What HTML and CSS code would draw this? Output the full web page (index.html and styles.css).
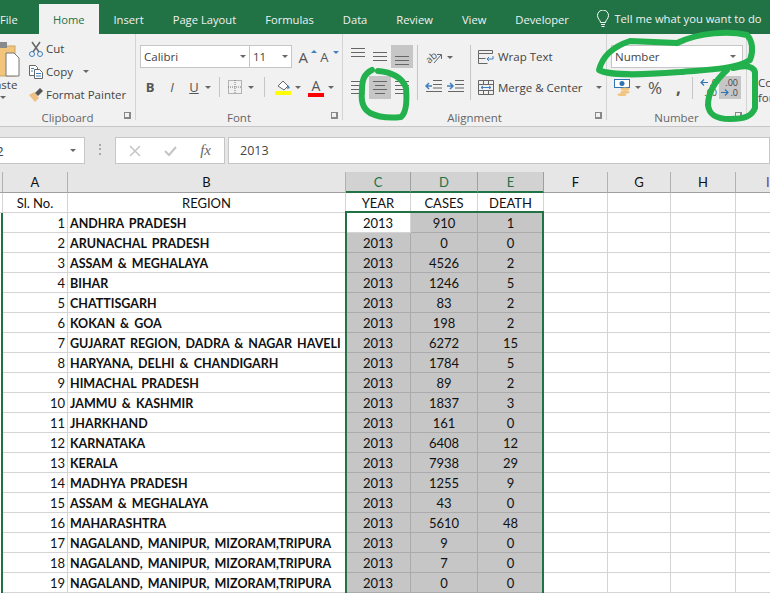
FILE: index.html
```html
<!DOCTYPE html>
<html lang="en">
<head>
    <meta charset="UTF-8">
    <title>Excel - Home ribbon</title>
    <link rel="stylesheet" href="styles.css">
</head>
<body>

<div class="tabs">
    <span class="tab tab-file">File</span>
    <span class="tab tab-active">Home</span>
    <span class="tab">Insert</span>
    <span class="tab">Page Layout</span>
    <span class="tab">Formulas</span>
    <span class="tab">Data</span>
    <span class="tab">Review</span>
    <span class="tab">View</span>
    <span class="tab">Developer</span>
    <span class="tell">
        <svg width="14" height="18" viewBox="0 0 14 18" fill="none" stroke="#fff"><path d="M4.5 12.5c0-2.5-3-3.500-3-7a5.500 5.500 0 0 1 11 0c0 3.500-3 4.500-3 7z"/><path d="M5 14.500h4M5.500 16.500h3"/></svg>
        Tell me what you want to do
    </span>
</div>

<div class="ribbon">
    <!-- Clipboard -->
    <section class="group group-clipboard">
        <div class="group-body clip-body">
            <div class="paste">
                <svg width="26" height="36" viewBox="0 0 26 36">
                    <rect x="-8" y="5" width="23" height="30" fill="#f3c47c" stroke="#c9a56b"/>
                    <rect x="-2" y="1" width="9" height="6" fill="#8a8a8a"/>
                    <path d="M6 12h8l5 5v18H6z" fill="#fff" stroke="#777"/>
                </svg>
                <span class="paste-label">Paste</span>
                <span class="caret paste-caret"></span>
            </div>
            <div class="clip-list">
                <div class="clip-row">
                    <svg width="16" height="16" viewBox="0 0 16 16" fill="none"><path d="M4 1l7 10M12 1L5 11" stroke="#666" stroke-width="1.500"/><circle cx="4" cy="13" r="2.500" stroke="#3f7fbf"/><circle cx="12" cy="13" r="2.500" stroke="#3f7fbf"/></svg>
                    <span>Cut</span>
                </div>
                <div class="clip-row">
                    <svg width="16" height="16" viewBox="0 0 16 16" fill="#fff" stroke="#666"><path d="M1.500 1.500h6l2 2v8h-8z"/><path d="M6.500 5.500h5l3 3v6h-8z"/><path d="M3 4.500h3M3 7h2M8 9.500h5M8 12h5" stroke="#3f7fbf"/></svg>
                    <span>Copy</span>
                    <span class="caret copy-caret"></span>
                </div>
                <div class="clip-row">
                    <svg width="16" height="16" viewBox="0 0 16 16"><path d="M1 8l5-3 5 6-4 4z" fill="#efc083"/><path d="M7 6l5-5 3 3-5 5z" fill="#555"/></svg>
                    <span>Format Painter</span>
                </div>
            </div>
        </div>
        <div class="group-label">Clipboard</div>
        <span class="launcher"></span>
    </section>

    <!-- Font -->
    <section class="group group-font">
        <div class="group-body font-body">
            <div class="tool-row">
                <div class="combo combo-font"><span>Calibri</span><span class="caret"></span></div>
                <div class="combo combo-size"><span>11</span><span class="caret"></span></div>
                <span class="grow-a">A<i class="tri-up"></i></span>
                <span class="shrink-a">A<i class="tri-down"></i></span>
            </div>
            <div class="tool-row font-row2">
                <b class="fmt fmt-b">B</b>
                <i class="fmt fmt-i">I</i>
                <u class="fmt fmt-u">U</u>
                <span class="caret"></span>
                <span class="sep sep-a"></span>
                <svg class="borders" width="14" height="14" viewBox="0 0 14 14" fill="none" stroke="#777" stroke-dasharray="1 1"><path d="M.5.500h13v13H.5zM7 0v14M0 7h14"/></svg>
                <span class="caret"></span>
                <span class="sep sep-b"></span>
                <span class="fill-icon">
                    <svg width="16" height="12" viewBox="0 0 16 12"><path d="M3 7l5-5 5 5-4 4z" fill="#fff" stroke="#666"/><path d="M13 6l2 3-3 1z" fill="#3f7fbf"/></svg>
                    <i class="swatch swatch-yellow"></i>
                </span>
                <span class="caret"></span>
                <span class="color-a">A<i class="swatch swatch-red"></i></span>
                <span class="caret"></span>
            </div>
        </div>
        <div class="group-label">Font</div>
        <span class="launcher"></span>
    </section>

    <!-- Alignment -->
    <section class="group group-align">
        <div class="group-body align-body">
            <div class="align-grid">
                <span class="btn"><i class="lines lines-top"></i></span>
                <span class="btn"><i class="lines lines-mid"></i></span>
                <span class="btn btn-on"><i class="lines lines-bot"></i></span>
                <span class="btn"><i class="lines lines-left"></i></span>
                <span class="btn btn-on"><i class="lines lines-center"></i></span>
                <span class="btn"><i class="lines lines-right"></i></span>
            </div>
            <span class="sep sep-tall"></span>
            <div class="indent-col">
                <div class="tool-row">
                    <svg width="18" height="18" viewBox="0 0 18 18" fill="none"><text x="0" y="13" font-size="10" font-family="Open Sans" fill="#555" transform="rotate(-40 6 9)">ab</text><path d="M9 15l7-8M12 6.500h4.500V11" stroke="#666"/></svg>
                    <span class="caret orient-caret"></span>
                </div>
                <div class="tool-row indent-row">
                    <svg width="17" height="12" viewBox="0 0 17 12" fill="none"><path d="M8 .500h9M8 4.500h9M8 8h9M1 11.500h16" stroke="#666"/><path d="M7 6H1M4 3L1 6l3 3" stroke="#3f7fbf" stroke-width="1.500"/></svg>
                    <svg width="17" height="12" viewBox="0 0 17 12" fill="none"><path d="M8 .500h9M8 4.500h9M8 8h9M1 11.500h16" stroke="#666"/><path d="M0 6h6M3 3l3 3-3 3" stroke="#3f7fbf" stroke-width="1.500"/></svg>
                </div>
            </div>
            <span class="sep sep-tall"></span>
            <div class="wrap-col">
                <div class="tool-row wrap-row">
                    <svg width="16" height="16" viewBox="0 0 16 16" fill="none"><path d="M.5 1.500h14v3H.5zM.5 4.500v10h9M.5 9.500h7" stroke="#666"/><path d="M15 7v3h-6M11 8l-2 2 2 2" stroke="#3f7fbf"/></svg>
                    <span>Wrap Text</span>
                </div>
                <div class="tool-row wrap-row">
                    <svg width="16" height="15" viewBox="0 0 16 15" fill="none"><path d="M.5.500h15v14H.5zM.5 4.500h15M.5 10.500h15M5.500.500v4M10.500.500v4M5.500 10.500v4M10.500 10.500v4" stroke="#666"/><path d="M3 7.500h10M5 6L3 7.500 5 9M11 6l2 1.500L11 9" stroke="#3f7fbf"/></svg>
                    <span>Merge &amp; Center</span>
                    <span class="caret merge-caret"></span>
                </div>
            </div>
        </div>
        <div class="group-label">Alignment</div>
        <span class="launcher"></span>
    </section>

    <!-- Number -->
    <section class="group group-number">
        <div class="group-body number-body">
            <div class="combo combo-number"><span>Number</span><span class="caret"></span></div>
            <div class="tool-row number-row">
                <svg width="17" height="17" viewBox="0 0 17 17"><rect x=".5" y=".5" width="15" height="8" fill="#fff" stroke="#2f75b5"/><circle cx="8" cy="4.500" r="2.500" fill="#2f75b5"/><ellipse cx="11" cy="10" rx="4.500" ry="1.500" fill="#f2c37e"/><ellipse cx="11" cy="13" rx="4.500" ry="1.500" fill="#f2c37e"/><ellipse cx="8" cy="15.500" rx="4.500" ry="1.500" fill="#f2c37e"/></svg>
                <span class="caret acct-caret"></span>
                <span class="percent">%</span>
                <span class="comma">,</span>
                <span class="sep sep-c"></span>
                <span class="dec dec-up">
                    <span class="dec-line"><svg width="8" height="7" viewBox="0 0 8 7" fill="none" stroke="#2f75b5" stroke-width="1.200"><path d="M8 3.500H1M4 .5l-3 3 3 3"/></svg><i>.0</i></span>
                    <span class="dec-line"><i>.00</i></span>
                </span>
                <span class="dec dec-down">
                    <span class="dec-line"><i>.00</i></span>
                    <span class="dec-line"><svg width="8" height="7" viewBox="0 0 8 7" fill="none" stroke="#2f75b5" stroke-width="1.200"><path d="M0 3.500h7M4 .5l3 3-3 3"/></svg><i>.0</i></span>
                </span>
            </div>
        </div>
        <div class="group-label">Number</div>
        <span class="launcher"></span>
    </section>

    <!-- Next group, cut off by the window -->
    <section class="group group-styles">
        <span>Co</span>
        <span>for</span>
    </section>
</div>

<div class="formula-bar">
    <div class="name-box"><span>C2</span><span class="caret"></span></div>
    <span class="grip"></span>
    <div class="fx-buttons">
        <svg width="12" height="12" viewBox="0 0 12 12" stroke="#c4c4c4" stroke-width="1.500"><path d="M1 1l10 10M11 1L1 11"/></svg>
        <svg width="13" height="12" viewBox="0 0 13 12" fill="none" stroke="#c4c4c4" stroke-width="2"><path d="M1 6l4 4 7-8"/></svg>
        <span class="fx">fx</span>
    </div>
    <div class="formula-input">2013</div>
</div>

<div class="sheet">
    <table class="grid">
        <colgroup>
            <col class="w-row"><col class="w-a"><col class="w-b"><col class="w-c"><col class="w-d"><col class="w-e"><col class="w-f"><col class="w-g"><col class="w-h"><col class="w-i">
        </colgroup>
        <thead>
            <tr>
                <th></th><th>A</th><th>B</th><th class="col-on">C</th><th class="col-on">D</th><th class="col-on">E</th><th>F</th><th>G</th><th>H</th><th class="col-i">I</th>
            </tr>
        </thead>
        <tbody>
            <tr class="titles"><td class="strip-off"></td><td class="mid">Sl. No.</td><td class="mid">REGION</td><td class="mid">YEAR</td><td class="mid">CASES</td><td class="mid">DEATH</td><td></td><td></td><td></td><td></td></tr>
            <tr><td class="strip"></td><td class="num">1</td><td class="name">ANDHRA PRADESH</td><td class="mid active">2013</td><td class="mid sel">910</td><td class="mid sel">1</td><td></td><td></td><td></td><td></td></tr>
            <tr><td class="strip"></td><td class="num">2</td><td class="name">ARUNACHAL PRADESH</td><td class="mid sel">2013</td><td class="mid sel">0</td><td class="mid sel">0</td><td></td><td></td><td></td><td></td></tr>
            <tr><td class="strip"></td><td class="num">3</td><td class="name">ASSAM &amp; MEGHALAYA</td><td class="mid sel">2013</td><td class="mid sel">4526</td><td class="mid sel">2</td><td></td><td></td><td></td><td></td></tr>
            <tr><td class="strip"></td><td class="num">4</td><td class="name">BIHAR</td><td class="mid sel">2013</td><td class="mid sel">1246</td><td class="mid sel">5</td><td></td><td></td><td></td><td></td></tr>
            <tr><td class="strip"></td><td class="num">5</td><td class="name">CHATTISGARH</td><td class="mid sel">2013</td><td class="mid sel">83</td><td class="mid sel">2</td><td></td><td></td><td></td><td></td></tr>
            <tr><td class="strip"></td><td class="num">6</td><td class="name">KOKAN &amp; GOA</td><td class="mid sel">2013</td><td class="mid sel">198</td><td class="mid sel">2</td><td></td><td></td><td></td><td></td></tr>
            <tr><td class="strip"></td><td class="num">7</td><td class="name">GUJARAT REGION, DADRA &amp; NAGAR HAVELI</td><td class="mid sel">2013</td><td class="mid sel">6272</td><td class="mid sel">15</td><td></td><td></td><td></td><td></td></tr>
            <tr><td class="strip"></td><td class="num">8</td><td class="name">HARYANA, DELHI &amp; CHANDIGARH</td><td class="mid sel">2013</td><td class="mid sel">1784</td><td class="mid sel">5</td><td></td><td></td><td></td><td></td></tr>
            <tr><td class="strip"></td><td class="num">9</td><td class="name">HIMACHAL PRADESH</td><td class="mid sel">2013</td><td class="mid sel">89</td><td class="mid sel">2</td><td></td><td></td><td></td><td></td></tr>
            <tr><td class="strip"></td><td class="num">10</td><td class="name">JAMMU &amp; KASHMIR</td><td class="mid sel">2013</td><td class="mid sel">1837</td><td class="mid sel">3</td><td></td><td></td><td></td><td></td></tr>
            <tr><td class="strip"></td><td class="num">11</td><td class="name">JHARKHAND</td><td class="mid sel">2013</td><td class="mid sel">161</td><td class="mid sel">0</td><td></td><td></td><td></td><td></td></tr>
            <tr><td class="strip"></td><td class="num">12</td><td class="name">KARNATAKA</td><td class="mid sel">2013</td><td class="mid sel">6408</td><td class="mid sel">12</td><td></td><td></td><td></td><td></td></tr>
            <tr><td class="strip"></td><td class="num">13</td><td class="name">KERALA</td><td class="mid sel">2013</td><td class="mid sel">7938</td><td class="mid sel">29</td><td></td><td></td><td></td><td></td></tr>
            <tr><td class="strip"></td><td class="num">14</td><td class="name">MADHYA PRADESH</td><td class="mid sel">2013</td><td class="mid sel">1255</td><td class="mid sel">9</td><td></td><td></td><td></td><td></td></tr>
            <tr><td class="strip"></td><td class="num">15</td><td class="name">ASSAM &amp; MEGHALAYA</td><td class="mid sel">2013</td><td class="mid sel">43</td><td class="mid sel">0</td><td></td><td></td><td></td><td></td></tr>
            <tr><td class="strip"></td><td class="num">16</td><td class="name">MAHARASHTRA</td><td class="mid sel">2013</td><td class="mid sel">5610</td><td class="mid sel">48</td><td></td><td></td><td></td><td></td></tr>
            <tr><td class="strip"></td><td class="num">17</td><td class="name">NAGALAND, MANIPUR, MIZORAM,TRIPURA</td><td class="mid sel">2013</td><td class="mid sel">9</td><td class="mid sel">0</td><td></td><td></td><td></td><td></td></tr>
            <tr><td class="strip"></td><td class="num">18</td><td class="name">NAGALAND, MANIPUR, MIZORAM,TRIPURA</td><td class="mid sel">2013</td><td class="mid sel">7</td><td class="mid sel">0</td><td></td><td></td><td></td><td></td></tr>
            <tr><td class="strip"></td><td class="num">19</td><td class="name">NAGALAND, MANIPUR, MIZORAM,TRIPURA</td><td class="mid sel">2013</td><td class="mid sel">0</td><td class="mid sel">0</td><td></td><td></td><td></td><td></td></tr>
        </tbody>
    </table>
    <div class="selection"></div>
</div>

<!-- green marker drawn over the screenshot -->
<svg class="marker" width="770" height="593" viewBox="0 0 770 593" fill="none" stroke="#22b14c" stroke-width="6" stroke-linecap="round" stroke-linejoin="round">
    <path d="M372 70C364 74 362 80 362 90C361 100 362 108 370 113C380 118 392 118 401 117C407 112 407 100 406 88C403 78 392 72 378 71"/>
    <path d="M677 43L630 41C615 46 603 54 599 70C610 76 640 75 680 72C700 70 735 70 750 60C754 50 752 40 747 35C730 31 700 32 677 43"/>
    <path d="M733 68C745 65 753 66 755 72V108C752 116 745 119 730 119C715 119 709 114 708 105C708 92 716 80 727 70"/>
</svg>

</body>
</html>
```

FILE: styles.css
```css
* {
    box-sizing: border-box;
}

body {
    margin: 0;
    width: 770px;
    height: 593px;
    overflow: hidden;
    background: #fff;
    font-family: "Open Sans", sans-serif;
    font-size: 11.500px;
    color: #444;
    position: relative;
}

/* tabs */
.tabs {
    display: flex;
    height: 34px;
    background: #217346;
    color: #f1f1f1;
    white-space: nowrap;
    font-size: 11.200px;
}

.tab {
    flex: none;
    padding: 11px 14.500px 0;
    line-height: 17px;
}

.tab-file {
    padding: 11px 0 0 0;
    width: 39px;
}

.tab-active {
    margin-top: 4px;
    padding: 7px 14px 0;
    width: 60px;
    background: #f1f1f1;
    color: #217346;
}

.tell {
    display: flex;
    flex: none;
    align-items: center;
    gap: 4px;
    margin-left: 13px;
    padding-top: 3px;
}

/* ribbon */
.ribbon {
    display: flex;
    height: 93px;
    background: #f1f1f1;
    border-bottom: 1px solid #c6c6c6;
    overflow: hidden;
}

.group {
    position: relative;
    flex: none;
    border-right: 1px solid #d4d4d4;
    margin-bottom: 6px;
}

.group-clipboard { width: 136px; }
.group-font { width: 207px; }
.group-align { width: 264px; }
.group-number { width: 140px; }

.group-styles {
    display: flex;
    flex-direction: column;
    padding: 41px 0 0 11px;
    line-height: 15px;
    border: none;
}

.group-body {
    height: 75px;
}

.group-label {
    text-align: center;
    font-size: 11.500px;
    line-height: 14px;
    color: #666;
    margin-top: 2px;
}

.launcher {
    position: absolute;
    right: 4px;
    bottom: 1px;
    width: 7px;
    height: 7px;
    border-left: 1px solid #888;
    border-top: 1px solid #888;
    border-right: 2px solid #888;
    border-bottom: 2px solid #888;
}

.caret {
    display: inline-block;
    flex: none;
    width: 0;
    height: 0;
    border-left: 3.500px solid transparent;
    border-right: 3.500px solid transparent;
    border-top: 3.500px solid #666;
}

.sep {
    display: block;
    flex: none;
    width: 1px;
    background: #c6c6c6;
}

.tool-row {
    display: flex;
    align-items: center;
}

/* clipboard */
.clip-body {
    display: flex;
}

.paste {
    position: relative;
    flex: none;
    width: 26px;
    padding-top: 7px;
    margin-right: 2px;
}

.paste svg {
    display: block;
}

.paste-label {
    display: block;
    margin: -1px 0 0 -12px;
    line-height: 17px;
}

.paste-caret {
    position: absolute;
    left: 0;
    top: 62px;
}

.clip-list {
    padding-top: 3px;
}

.clip-row {
    display: flex;
    align-items: center;
    gap: 2px;
    height: 23px;
}

.clip-row svg {
    flex: none;
    width: 16px;
}

.copy-caret {
    margin-left: 8px;
}

/* font */
.font-body {
    padding: 11px 0 0 4px;
}

.combo {
    display: flex;
    align-items: center;
    justify-content: space-between;
    height: 23px;
    padding: 0 3px;
    background: #fff;
    border: 1px solid #c6c6c6;
    color: #444;
}

.combo-font {
    width: 111px;
}

.combo-size {
    width: 43px;
    border-left: none;
}

.grow-a, .shrink-a {
    position: relative;
    font-size: 15px;
    color: #555;
}

.grow-a { margin-left: 6px; width: 22px; }
.shrink-a { font-size: 13px; width: 22px; }

.tri-up, .tri-down {
    position: absolute;
    right: 3px;
    top: 3px;
    width: 0;
    height: 0;
    border-left: 3px solid transparent;
    border-right: 3px solid transparent;
}

.tri-up { border-bottom: 3px solid #3f7fbf; }
.tri-down { border-top: 3px solid #3f7fbf; }

.font-row2 {
    height: 22px;
    margin-top: 8px;
}

.fmt {
    width: 22px;
    text-align: center;
    font-size: 13px;
    color: #555;
}

.fmt-b { margin-left: -1px; }

.sep-a { height: 20px; margin: 0 8px; }
.sep-b { height: 20px; margin: 0 10px; }

.borders { margin-right: 6px; }

.fill-icon {
    display: flex;
    flex-direction: column;
    width: 16px;
    margin-right: 4px;
}

.swatch {
    display: block;
    height: 4px;
}

.swatch-yellow { background: #ffff00; }
.swatch-red { background: #ff0000; margin-top: -1px; }

.color-a {
    width: 16px;
    margin: 0 4px 0 7px;
    font-size: 14px;
    line-height: 17px;
    text-align: center;
    color: #555;
}

/* alignment */
.align-body {
    display: flex;
    padding: 11px 0 0 4px;
}

.align-grid {
    display: grid;
    grid-template-columns: 22px 22px 22px;
    grid-auto-rows: 23px;
    row-gap: 8px;
    flex: none;
    width: 70px;
}

.btn {
    display: flex;
    align-items: center;
    justify-content: center;
}

.btn-on {
    background: #c6c6c6;
}

.lines {
    display: block;
    width: 14px;
    height: 9px;
    background: repeating-linear-gradient(#666 0 1px, transparent 1px 4px);
}

.lines-top { margin-top: -9px; }
.lines-mid { margin-top: 0; }
.lines-bot { margin-top: 7px; }
.lines-left { height: 13px; background: linear-gradient(#666, #666) 0 0/14px 1px no-repeat, linear-gradient(#666, #666) 0 4px/14px 1px no-repeat, linear-gradient(#666, #666) 0 8px/14px 1px no-repeat, linear-gradient(#666, #666) 0 12px/14px 1px no-repeat; }
.lines-center { height: 13px; background: linear-gradient(#666, #666) 0 0/14px 1px no-repeat, linear-gradient(#666, #666) 2px 4px/10px 1px no-repeat, linear-gradient(#666, #666) 0 8px/14px 1px no-repeat, linear-gradient(#666, #666) 2px 12px/10px 1px no-repeat; }
.lines-right { height: 13px; background: linear-gradient(#666, #666) 0 0/14px 1px no-repeat, linear-gradient(#666, #666) 0 4px/14px 1px no-repeat, linear-gradient(#666, #666) 0 8px/14px 1px no-repeat, linear-gradient(#666, #666) 0 12px/14px 1px no-repeat; }

.sep-tall {
    height: 55px;
}

.indent-col {
    flex: none;
    width: 52px;
    padding: 3px 0 0 7px;
}

.orient-caret { margin-left: 4px; }

.indent-row {
    gap: 5px;
    margin-top: 14px;
}

.wrap-col {
    flex: none;
    padding: 1px 0 0 7px;
}

.wrap-row {
    gap: 4px;
    height: 21px;
    margin-bottom: 10px;
}

.merge-caret {
    margin-left: 9px;
}

/* number */
.number-body {
    padding: 11px 0 0 4px;
}

.combo-number {
    width: 132px;
    padding-right: 6px;
}

.number-row {
    height: 23px;
    margin-top: 8px;
    padding-left: 3px;
}

.acct-caret { margin-left: 4px; }

.percent {
    margin-left: 7px;
    width: 20px;
    font-size: 17px;
    color: #555;
}

.comma {
    margin-left: 8px;
    width: 15px;
    font-size: 17px;
    font-weight: 700;
    line-height: 14px;
    color: #555;
}

.sep-c { height: 22px; margin-left: 1px; }

.dec {
    display: flex;
    flex-direction: column;
    justify-content: center;
    width: 22px;
    height: 23px;
    font-size: 9px;
    line-height: 10px;
    color: #444;
}

.dec i { font-style: normal; }

.dec-line {
    display: flex;
    align-items: center;
    justify-content: flex-end;
    gap: 1px;
}

.dec-up { margin-left: 6px; width: 18px; }

.dec-down {
    margin-left: 2px;
    padding-right: 3px;
    background: #c6c6c6;
}

/* formula bar */
.formula-bar {
    display: flex;
    height: 45px;
    padding: 10px 0 8px;
    background: #e6e6e6;
}

.name-box {
    display: flex;
    align-items: center;
    justify-content: space-between;
    width: 98px;
    margin-left: -13px;
    padding: 0 8px 0 0;
    background: #fff;
    border: 1px solid #c6c6c6;
    font-size: 13px;
    flex: none;
}

.grip {
    flex: none;
    width: 2px;
    height: 11px;
    margin: 7px 14px 0;
    background: repeating-linear-gradient(#aaa 0 2px, transparent 2px 4.500px);
}

.fx-buttons {
    display: flex;
    align-items: center;
    justify-content: space-between;
    flex: none;
    width: 110px;
    padding: 0 13px;
    background: #fff;
    border: 1px solid #c6c6c6;
}

.fx {
    font-family: "Liberation Serif", serif;
    font-style: italic;
    font-size: 15px;
    color: #666;
}

.formula-input {
    flex: 1;
    margin-left: 3px;
    padding: 4px 0 0 11px;
    background: #fff;
    border: 1px solid #c6c6c6;
    font-size: 12.500px;
    line-height: 17px;
}

/* sheet */
.sheet {
    position: relative;
    height: 421px;
    overflow: hidden;
    font-family: "Lato", sans-serif;
    color: #111;
}

.grid {
    width: 828px;
    table-layout: fixed;
    border-collapse: separate;
    border-spacing: 0;
    font-size: 13px;
}

.w-row { width: 3px; }
.w-a { width: 65px; }
.w-b { width: 278px; }
.w-c { width: 65px; }
.w-d { width: 67px; }
.w-e { width: 66px; }
.w-f { width: 64px; }
.w-g { width: 63px; }
.w-h { width: 65px; }
.w-i { width: 92px; }

.grid th {
    height: 21px;
    padding: 0;
    background: #e6e6e6;
    border-right: 1px solid #b1b1b1;
    border-bottom: 1px solid #9f9f9f;
    font-weight: 400;
    font-size: 13px;
}

.grid th.col-on {
    background: #d2d2d2;
    color: #217346;
    border-right-color: #9f9f9f;
    border-bottom: 2px solid #217346;
}

.grid th.col-i {
    color: #7030a0;
    text-align: left;
    padding-left: 30px;
}

.grid td {
    height: 20px;
    padding: 0;
    border-right: 1px solid #d4d4d4;
    border-bottom: 1px solid #d4d4d4;
    white-space: nowrap;
    overflow: hidden;
}

.grid td.strip {
    border-bottom: none;
    border-right: 2px solid #217346;
}

.mid {
    text-align: center;
}

.num {
    text-align: right;
    padding-right: 2px !important;
}

.name {
    padding: 1px 0 0 2px !important;
    font-weight: 700;
    font-size: 12.500px;
    word-spacing: 2px;
}

.grid td.sel {
    background: #c6c6c6;
    border-color: #ababab;
}

.selection {
    position: absolute;
    left: 345px;
    top: 39px;
    width: 199px;
    height: 420px;
    border: 2px solid #217346;
}

.marker {
    position: absolute;
    left: 0;
    top: 0;
    pointer-events: none;
}
```
